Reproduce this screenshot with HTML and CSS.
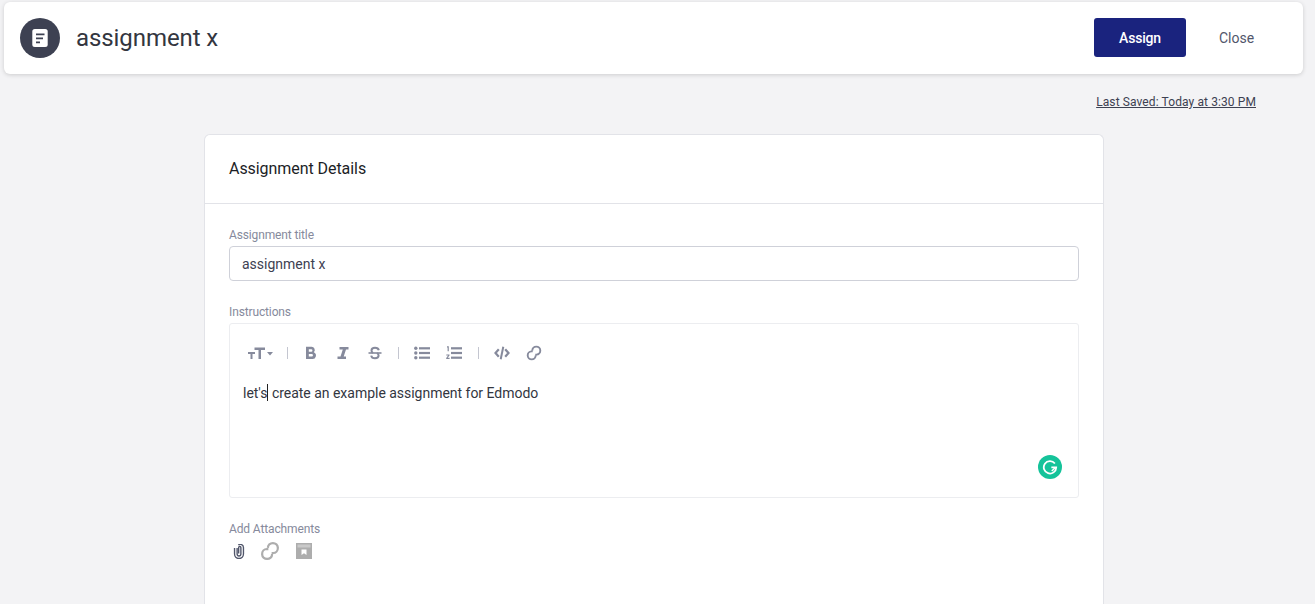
FILE: index.html
```html
<!DOCTYPE html>
<html lang="en">
<head>
<meta charset="utf-8">
<title>assignment x</title>
<link rel="stylesheet" href="styles.css">
</head>
<body>
<header class="topbar">
  <div class="topbar-left">
    <span class="avatar">
      <svg width="16" height="18" viewBox="0 0 16 18"><rect x="0.3" y="0" width="15.4" height="18" rx="2.5" fill="#fff"/><path d="M4 5.3h8.5M4 9.3h7M4 13.3h4" stroke="#3d4152" stroke-width="1.7" fill="none"/></svg>
    </span>
    <h1 class="doc-title">assignment x</h1>
  </div>
  <div class="topbar-actions">
    <button class="btn-assign">Assign</button>
    <button class="btn-close">Close</button>
  </div>
</header>
<div class="saved-row"><a class="saved-link">Last Saved: Today at 3:30 PM</a></div>
<main class="card">
  <div class="card-head">Assignment Details</div>
  <div class="card-body">
    <label class="field-label">Assignment title</label>
    <div class="text-input">assignment x</div>
    <label class="field-label instructions-label">Instructions</label>
    <div class="editor">
      <div class="toolbar">
        <span class="tool-size">
          <svg width="26" height="14" viewBox="0 0 26 14"><path d="M1 6h7v2H5.500v5H3.500V8H1zM7.500 1.500H18v2.500h-4V13h-2.500V4H7.500z" fill="#868a9c"/><path d="M20 6h6l-3 3.400z" fill="#868a9c"/></svg>
        </span>
        <span class="sep"></span>
        <span class="tool"><svg width="12" height="14" viewBox="0 0 12 14"><path d="M1 .8h5.500a3.200 3.200 0 0 1 2.300 5.500A3.500 3.500 0 0 1 7 13H1zM3.800 3.200v2.500h2.400a1.250 1.250 0 0 0 0-2.500zM3.800 8.100v2.500h2.900a1.250 1.250 0 0 0 0-2.500z" fill="#868a9c" fill-rule="evenodd"/></svg></span>
        <span class="tool"><svg width="12" height="14" viewBox="0 0 12 14"><path d="M2.500 1h9v2.500H9L6.700 10.500H9V13H.5v-2.500h3L5.800 3.500H2.500z" fill="#868a9c"/></svg></span>
        <span class="tool tool-end"><svg width="14" height="14" viewBox="0 0 14 14"><path d="M.5 7h13" stroke="#868a9c" stroke-width="1.600"/><path d="M10.800 4.200C10.400 2.500 9 1.700 7 1.700 5 1.700 3.500 2.700 3.500 4.400 3.500 5.500 4 6.300 5 7M9 7c1 .7 1.600 1.500 1.600 2.600 0 1.700-1.500 2.700-3.600 2.700-2 0-3.500-1-3.800-2.700" stroke="#868a9c" stroke-width="2" fill="none"/></svg></span>
        <span class="sep"></span>
        <span class="tool"><svg width="16" height="14" viewBox="0 0 16 14"><g fill="#868a9c"><circle cx="1.800" cy="2.300" r="1.700"/><circle cx="1.800" cy="7" r="1.700"/><circle cx="1.800" cy="11.700" r="1.700"/><rect x="5" y="1.200" width="11" height="2.200"/><rect x="5" y="5.900" width="11" height="2.200"/><rect x="5" y="10.600" width="11" height="2.200"/></g></svg></span>
        <span class="tool"><svg width="16" height="14" viewBox="0 0 16 14"><g fill="#868a9c"><rect x="5" y="1.200" width="11" height="2.200"/><rect x="5" y="5.900" width="11" height="2.200"/><rect x="5" y="10.600" width="11" height="2.200"/><path d="M1 .3h1.800v5H1.600V1.400H1zM.3 8.400h3.200v1l-1.800 2.400h1.900v1.100H.2v-1l1.900-2.500H.3z"/></g></svg></span>
        <span class="sep"></span>
        <span class="tool"><svg width="16" height="14" viewBox="0 0 16 14"><path d="M4.800 3.200 1.500 7l3.300 3.800M11.200 3.200 14.500 7l-3.300 3.800" stroke="#868a9c" stroke-width="2.200" fill="none"/><path d="M9.300.8 6.700 13.200" stroke="#868a9c" stroke-width="2"/></svg></span>
        <span class="tool"><svg width="16" height="16" viewBox="0 0 16 16"><path d="M6.300 5.500A4 4 0 1 1 10.500 9.600H9.300M9.700 10.500A4 4 0 1 1 5.500 6.400H6.700" stroke="#868a9c" stroke-width="1.900" fill="none"/></svg></span>
      </div>
      <div class="editor-text">let's<span class="caret"></span> create an example assignment for Edmodo</div>
      <span class="grammarly">
        <svg width="16" height="16" viewBox="0 0 18 18"><path d="M14.500 5A7 7 0 1 0 16 9.500H10.500" stroke="#fff" stroke-width="2" fill="none"/><path d="M11 13.500 15 9.500" stroke="#fff" stroke-width="1.600" fill="none"/></svg>
      </span>
    </div>
    <label class="field-label attach-label">Add Attachments</label>
    <div class="attach-row">
      <svg class="attach-clip" width="12" height="15" viewBox="0 0 14 17"><path d="M4.800 4.500v7a2.200 2.200 0 0 0 4.400 0V3.800a1.300 1.300 0 0 0-2.600 0v7M1.800 4.500V11.500a5.200 5.200 0 0 0 10.400 0V3.800a3.700 3.700 0 0 0-6-2.800" stroke="#51566b" stroke-width="1.600" fill="none"/></svg>
      <svg class="attach-link" width="20" height="20" viewBox="0 0 16 16"><path d="M6.300 5.500A4 4 0 1 1 10.500 9.600H9.300M9.700 10.500A4 4 0 1 1 5.500 6.400H6.700" stroke="#adadad" stroke-width="1.800" fill="none"/></svg>
      <svg width="16" height="16" viewBox="0 0 16 16"><rect width="16" height="16" fill="#adadad"/><rect x="1.500" y="1.500" width="13" height="3" fill="#c9c9c9"/><path d="M5.500 6.500h5v5.500L8 10.300 5.500 12z" fill="#fff"/></svg>
    </div>
  </div>
</main>
</body>
</html>
```
FILE: styles.css
```css
* { box-sizing: border-box; }
html, body { height: 604px; overflow: hidden; }
body {
  margin: 0;
  background: #f3f3f5;
  font-family: Roboto, "Liberation Sans", Arial, sans-serif;
  color: #3d4152;
}
.topbar {
  margin: 2px 12px 0 4px;
  height: 72px;
  background: #fff;
  border-radius: 6px;
  box-shadow: 0 1px 4px rgba(0, 0, 0, .16);
  display: flex;
  align-items: center;
  justify-content: space-between;
  padding: 0 16px;
}
.topbar-left { display: flex; align-items: center; gap: 16px; }
.avatar {
  width: 40px;
  height: 40px;
  border-radius: 50%;
  background: #3d4152;
  display: flex;
  align-items: center;
  justify-content: center;
}
.doc-title { margin: 0; font-size: 24px; font-weight: 400; color: #33363f; letter-spacing: -.08px; }
.topbar-actions { display: flex; align-items: center; margin-bottom: 1px; }
.btn-assign, .btn-close { font: inherit; font-size: 14px; border: 0; cursor: pointer; }
.btn-assign {
  width: 92px;
  height: 39px;
  background: #1a237e;
  color: #fff;
  border-radius: 3px;
  font-weight: 500;
  letter-spacing: -.2px;
}
.btn-close {
  width: 101px;
  height: 39px;
  background: transparent;
  color: #51566b;
}
.saved-row {
  display: flex;
  justify-content: flex-end;
  padding: 21px 59px 0 0;
  height: 60px;
}
.saved-link { font-size: 12px; line-height: 14px; color: #3d4152; text-decoration: underline; letter-spacing: .1px; }
.card {
  width: 900px;
  height: 470px;
  margin-left: 204px;
  background: #fff;
  border: 1px solid #e2e3e8;
  border-bottom: 0;
  border-radius: 6px 6px 0 0;
}
.card-head {
  height: 69px;
  padding: 0 0 2px 24px;
  display: flex;
  align-items: center;
  font-size: 16px;
  color: #1c1e26;
  letter-spacing: -.06px;
  border-bottom: 1px solid #e2e3e8;
}
.card-body { padding: 24px 24px 0; }
.field-label { display: block; font-size: 12px; line-height: 14px; color: #868a9c; letter-spacing: -.13px; }
.text-input {
  margin-top: 4px;
  height: 35px;
  border: 1px solid #cfd1d9;
  border-radius: 4px;
  padding: 1px 12px 0;
  font-size: 14px;
  line-height: 33px;
  color: #3d4152;
}
.instructions-label { margin-top: 24px; }
.editor {
  position: relative;
  margin-top: 4px;
  height: 175px;
  border: 1px solid #ecedf0;
  border-radius: 3px;
  padding: 0 13px;
}
.toolbar { display: flex; align-items: center; height: 58px; padding-left: 4px; }
.tool { width: 16px; display: flex; align-items: center; justify-content: center; margin-right: 16px; }
.tool-end { margin-right: 15px; }
.tool-size { display: flex; align-items: center; margin-right: 14px; }
.sep { width: 1px; height: 12px; background: #c4c6d0; margin-right: 15px; }
.editor-text { font-size: 14px; line-height: 20px; color: #33363f; margin-top: 1px; letter-spacing: -.02px; }
.caret { display: inline-block; width: 1px; height: 17px; background: #222; vertical-align: -3px; }
.grammarly {
  position: absolute;
  right: 16px;
  bottom: 18px;
  width: 24px;
  height: 24px;
  border-radius: 50%;
  background: #15c39a;
  display: flex;
  align-items: center;
  justify-content: center;
}
.attach-label { margin-top: 24px; }
.attach-row { display: flex; align-items: center; margin-top: 5px; padding-left: 4px; }
.attach-clip { margin-right: 15px; }
.attach-link { margin-right: 16px; }
```
